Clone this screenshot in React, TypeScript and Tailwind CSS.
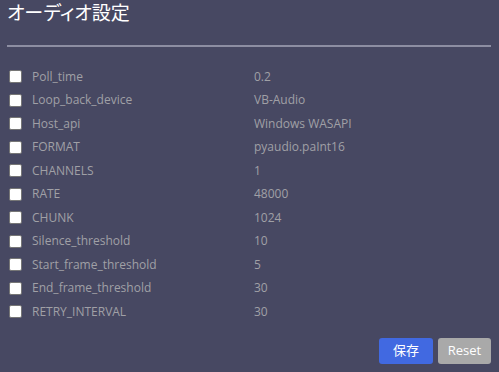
const rows: [string, string][] = [
    ['Poll_time', '0.2'],
    ['Loop_back_device', 'VB-Audio'],
    ['Host_api', 'Windows WASAPI'],
    ['FORMAT', 'pyaudio.paInt16'],
    ['CHANNELS', '1'],
    ['RATE', '48000'],
    ['CHUNK', '1024'],
    ['Silence_threshold', '10'],
    ['Start_frame_threshold', '5'],
    ['End_frame_threshold', '30'],
    ['RETRY_INTERVAL', '30'],
];

export default function App() {
    return (
        <div
            className="w-[499px] h-[372px] bg-[#474862] px-[7px] pt-[1px] overflow-hidden"
            style={{ fontFamily: '"Open Sans", "Noto Sans CJK JP", sans-serif' }}
        >
            {/* Title */}
            <h1 className="text-[19px] leading-[25px] text-white [font-feature-settings:'palt']">
                オーディオ設定
            </h1>

            {/* Divider */}
            <div className="mt-[19px] mr-[1px] h-[2px] bg-[#8d8ea2]" />

            {/* Settings list */}
            <ul className="mt-[18px] flex flex-col">
                {rows.map(([label, value]) => (
                    <li key={label} className="flex items-center h-[23.5px]">
                        <input
                            type="checkbox"
                            className="ml-[2px] w-[13px] h-[13px] appearance-none bg-white rounded-[2px] border border-[#767676]"
                        />
                        <span className="ml-[10px] w-[222px] text-[12px] text-[#a0a0a6]">{label}</span>
                        <span className="text-[12px] text-[#a0a0a6]">{value}</span>
                    </li>
                ))}
            </ul>

            {/* Actions */}
            <div className="mt-[14px] mr-[1px] flex justify-end gap-[5px]">
                <button className="w-[54px] h-[26px] rounded-[3px] bg-[#4169e1] text-[13px] text-white">
                    保存
                </button>
                <button className="w-[53px] h-[26px] rounded-[3px] bg-[#a9a9a9] text-[13px] font-medium text-white">
                    Reset
                </button>
            </div>
        </div>
    );
}
